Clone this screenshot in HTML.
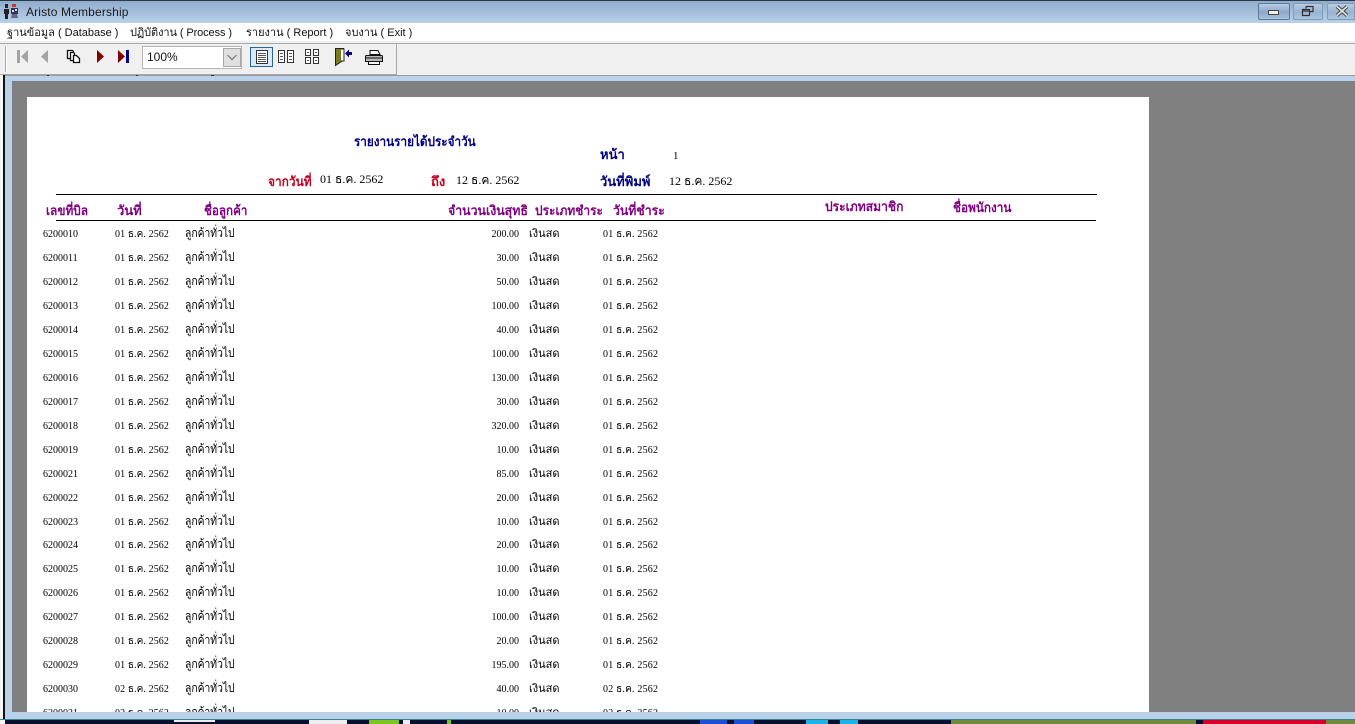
<!DOCTYPE html>
<html><head><meta charset="utf-8"><style>
html,body{margin:0;padding:0;width:1355px;height:724px;overflow:hidden;background:#fff}
*{box-sizing:border-box}
.a{position:absolute;white-space:nowrap}
.ui{font-family:"Liberation Sans","DejaVu Sans",sans-serif;font-size:11px;color:#111}
#rep,#rep *{font-family:"Liberation Serif","DejaVu Serif","DejaVu Sans",serif}
.h{font-weight:bold;font-size:13px;line-height:16px;transform-origin:0 50%}
.n{color:#000080}.r{color:#c00020}.p{color:#800080}
.v{font-size:12px;line-height:14px;color:#000}
.row{position:absolute;left:0;width:1122px;height:20px;font-size:10px;line-height:20px;color:#000}
.row span{position:absolute;white-space:nowrap;top:2px}
.row .b{left:16px}
.row .d{left:88px;letter-spacing:.1px}
.row .c{left:158px;font-size:12px;top:0;transform:scaleX(.86);transform-origin:0 50%}
.row .m{right:630px}
.row .t{left:502px;font-size:11px;top:1px}
.row .e{left:576px;letter-spacing:.2px}
</style></head><body>
<div class="a" style="left:0;top:0;width:1355px;height:23px;background:linear-gradient(#8fabca,#b9d1ea)"></div>
<div class="a" style="left:0;top:0;width:1355px;height:1px;background:#2b3a4b"></div>
<svg class="a" style="left:3px;top:3px" width="17" height="17" viewBox="0 0 17 17"><path d="M2 1h3v4H2zM1 6h5v5H5v5H2v-5H1z" fill="#222"/><path d="M9 1h4v3H9z" fill="#c33"/><path d="M8 5h7v6H8z" fill="#335"/><path d="M9 11l-1 4h7l-1-4z" fill="#668"/><path d="M9 7h2v2H9zM12 6h2v2h-2z" fill="#ddd"/></svg>
<div class="a ui" style="left:26px;top:4px;font-size:12px;line-height:16px;letter-spacing:.15px;color:#1a1a1a">Aristo Membership</div>
<div class="a" style="left:1258px;top:3px;width:32px;height:17px;border:1px solid #5d7a99;border-radius:2px;background:linear-gradient(#b8cce2,#8ca8c8 55%,#a9c2dd)"></div>
<div class="a" style="left:1268px;top:10px;width:11px;height:5px;border:1px solid #444;background:#eee"></div>
<div class="a" style="left:1293px;top:3px;width:30px;height:17px;border:1px solid #7f9bba;border-radius:2px;background:linear-gradient(#b8cce2,#98b3d1 55%,#aec6e0)"></div>
<svg class="a" style="left:1301px;top:5px" width="14" height="12" viewBox="0 0 14 12"><path d="M5 1.500h7v5H9M5 1.500v2M1.500 4.500h7v6h-7zM1.500 6h7" fill="none" stroke="#333" stroke-width="1.200"/></svg>
<div class="a" style="left:1327px;top:3px;width:28px;height:17px;border:1px solid #7f9bba;border-radius:2px 0 0 2px;background:linear-gradient(#b8cce2,#98b3d1 55%,#aec6e0)"></div>
<svg class="a" style="left:1335px;top:5px" width="14" height="12" viewBox="0 0 14 12"><path d="M2 1.500l10 9M12 1.500l-10 9" stroke="#444" stroke-width="3.600"/><path d="M2 1.500l10 9M12 1.500l-10 9" stroke="#e4e4e4" stroke-width="1.600"/></svg>

<div class="a" style="left:0;top:23px;width:1355px;height:18px;background:#fff"></div>
<div class="a ui" style="left:7px;top:25px;line-height:16px">ฐานข้อมูล ( Database )</div>
<div class="a ui" style="left:130px;top:25px;line-height:16px;letter-spacing:-.1px">ปฏิบัติงาน ( Process )</div>
<div class="a ui" style="left:246px;top:25px;line-height:16px">รายงาน ( Report )</div>
<div class="a ui" style="left:345px;top:25px;line-height:16px">จบงาน ( Exit )</div>

<div class="a" style="left:0;top:41px;width:1355px;height:34px;background:#f0f0f0"></div>
<div class="a" style="left:0;top:43px;width:1355px;height:1px;background:#a8a8a8"></div>
<div class="a" style="left:396px;top:43px;width:1px;height:32px;background:#a8a8a8"></div>
<div class="a" style="left:0;top:74px;width:397px;height:1px;background:#a8a8a8"></div>
<div class="a" style="left:5px;top:46px;width:2px;height:26px;border-left:1px solid #aaa;border-right:1px solid #fff"></div>

<svg class="a" style="left:0;top:44px" width="400" height="30" viewBox="0 44 400 30">
<path d="M17 50h3v13h-3zM28 50v13l-7-6.500z" fill="#a3a3a3"/>
<path d="M48 50v13l-7-6.500z" fill="#a3a3a3"/>
<path d="M67.500 50.500h5l1 1v7h-6z" fill="#fff" stroke="#111" stroke-width="1.300"/>
<path d="M70.500 52.500h3l1 1v7h-4z" fill="#fff" stroke="#111" stroke-width="1.300"/>
<path d="M73.500 55.500h3l3 3v4h-6z" fill="#fff" stroke="#111" stroke-width="1.300"/>
<path d="M97 50v13l7-6.500z" fill="#800000"/>
<path d="M118 50v13l7-6.500z" fill="#800000"/><path d="M126 50h3v13h-3z" fill="#000080"/>
<path d="M251 48h21v18h-21z" fill="#dbe9f7"/>
<path d="M250.500 47.500h22v19h-22z" fill="none" stroke="#2a6496"/>
<path d="M256.500 50.500h11v13h-11z" fill="#fff" stroke="#333"/>
<path d="M258 53.500h8M258 55.500h8M258 57.500h8M258 59.500h8M258 61.500h8" fill="none" stroke="#555"/>
<path d="M278.500 50.500h6v12h-6zM287.500 50.500h6v12h-6z" fill="#fff" stroke="#333"/>
<path d="M280 53.500h3M280 56.500h3M280 59.500h3M289 53.500h3M289 56.500h3M289 59.500h3" fill="none" stroke="#555"/>
<path d="M305.500 49.500h5v6h-5zM313.500 49.500h5v6h-5zM305.500 57.500h5v6h-5zM313.500 57.500h5v6h-5z" fill="#fff" stroke="#333"/>
<path d="M307 52.500h2M315 52.500h2M307 60.500h2M315 60.500h2" fill="none" stroke="#555"/>
<path d="M335.500 48.500h8v2l-2 0v11l-6 4z" fill="#7a7a20" stroke="#222"/><path d="M341 49h3v12h-3" fill="#fff" stroke="#222"/>
<path d="M345 53.500l4-4v2.500h3v3h-3v2.500z" fill="#000080"/>
<path d="M370 50.500h8l2 4h-10z" fill="#fff" stroke="#111"/><path d="M366.500 55.500h15q1 0 1 1v5h-17v-5q0-1 1-1z" fill="#bbb" stroke="#111"/><path d="M368.500 61.500h11v3h-11z" fill="#fff" stroke="#111"/><path d="M366 58h16" stroke="#111"/>
</svg>
<div class="a" style="left:142px;top:46px;width:100px;height:23px;background:#fff;border:1px solid #b5b5b5"></div>
<div class="a ui" style="left:147px;top:50px;line-height:15px;font-size:12px">100%</div>
<div class="a" style="left:223px;top:48px;width:18px;height:19px;background:#dfdfdf;border:1px solid #a8a8a8"></div>
<svg class="a" style="left:226px;top:54px" width="12" height="7" viewBox="0 0 12 7"><path d="M1.500 1l4.500 4.500 4.500-4.500" fill="none" stroke="#777" stroke-width="1.200"/></svg>

<div class="a" style="left:0;top:75px;width:3px;height:644px;background:#f4f4f4"></div>
<div class="a" style="left:3px;top:75px;width:2px;height:645px;background:#111"></div>
<div class="a" style="left:5px;top:75px;width:1350px;height:1px;background:#9a9a9a"></div>
<div class="a" style="left:47px;top:75px;width:2px;height:1px;background:#333"></div>
<div class="a" style="left:136px;top:75px;width:2px;height:1px;background:#333"></div>
<div class="a" style="left:211px;top:75px;width:3px;height:1px;background:#333"></div>
<div class="a" style="left:5px;top:76px;width:1350px;height:643px;background:#b9d1ea"></div>
<div class="a" style="left:12px;top:81px;width:1343px;height:631px;background:#808080"></div>
<div class="a" style="left:0;top:719px;width:1355px;height:1px;background:#3d7f90"></div>
<div class="a" style="left:0;top:720px;width:1355px;height:4px;background:#081030"></div>
<div class="a" style="left:0;top:720px;width:5px;height:4px;background:#f4f4f4"></div>
<div class="a" style="left:174px;top:720px;width:41px;height:2px;background:#eee"></div>
<div class="a" style="left:309px;top:720px;width:38px;height:4px;background:#eee"></div>
<div class="a" style="left:369px;top:720px;width:30px;height:4px;background:#7dc41e"></div>
<div class="a" style="left:403px;top:720px;width:7px;height:4px;background:#eee"></div>
<div class="a" style="left:447px;top:720px;width:4px;height:4px;background:#7dc41e"></div>
<div class="a" style="left:700px;top:720px;width:27px;height:4px;background:#1d4ed8"></div>
<div class="a" style="left:734px;top:720px;width:20px;height:4px;background:#1d4ed8"></div>
<div class="a" style="left:806px;top:720px;width:22px;height:4px;background:#19b5e8"></div>
<div class="a" style="left:840px;top:720px;width:18px;height:4px;background:#19b5e8"></div>
<div class="a" style="left:951px;top:720px;width:245px;height:4px;background:#6f8a3c"></div>
<div class="a" style="left:1203px;top:720px;width:123px;height:4px;background:#d8002a"></div>
<div class="a" style="left:1326px;top:720px;width:29px;height:4px;background:#6f8a3c"></div>

<div id="rep" class="a" style="left:27px;top:97px;width:1122px;height:615px;background:#fff;overflow:hidden">
<div class="a h n" style="left:327px;top:37px;transform:scaleX(.904)">รายงานรายได้ประจำวัน</div>
<div class="a h n" style="left:573px;top:50px">หน้า</div>
<div class="a v" style="left:646px;top:52px;font-size:11px">1</div>
<div class="a h r" style="left:241px;top:77px;transform:scaleX(.917)">จากวันที่</div>
<div class="a v" style="left:293px;top:75px">01 ธ.ค. 2562</div>
<div class="a h r" style="left:404px;top:77px">ถึง</div>
<div class="a v" style="left:429px;top:76px">12 ธ.ค. 2562</div>
<div class="a h n" style="left:573px;top:77px">วันที่พิมพ์</div>
<div class="a v" style="left:642px;top:77px">12 ธ.ค. 2562</div>
<div class="a" style="left:29px;top:97px;width:1041px;height:1px;background:#000"></div>
<div class="a" style="left:29px;top:123px;width:1040px;height:1px;background:#000"></div>
<div class="a h p" style="left:19px;top:106px;transform:scaleX(.913)">เลขที่บิล</div>
<div class="a h p" style="left:90px;top:106px">วันที่</div>
<div class="a h p" style="left:177px;top:106px;transform:scaleX(.896)">ชื่อลูกค้า</div>
<div class="a h p" style="left:421px;top:106px;transform:scaleX(.95)">จำนวนเงินสุทธิ</div>
<div class="a h p" style="left:508px;top:106px;transform:scaleX(.92)">ประเภทชำระ</div>
<div class="a h p" style="left:586px;top:106px;transform:scaleX(.945)">วันที่ชำระ</div>
<div class="a h p" style="left:798px;top:102px;transform:scaleX(.93)">ประเภทสมาชิก</div>
<div class="a h p" style="left:926px;top:103px;transform:scaleX(.906)">ชื่อพนักงาน</div>

<div class="row" style="top:126px"><span class="b">6200010</span><span class="d">01 ธ.ค. 2562</span><span class="c">ลูกค้าทั่วไป</span><span class="m">200.00</span><span class="t">เงินสด</span><span class="e">01 ธ.ค. 2562</span></div>
<div class="row" style="top:150px"><span class="b">6200011</span><span class="d">01 ธ.ค. 2562</span><span class="c">ลูกค้าทั่วไป</span><span class="m">30.00</span><span class="t">เงินสด</span><span class="e">01 ธ.ค. 2562</span></div>
<div class="row" style="top:174px"><span class="b">6200012</span><span class="d">01 ธ.ค. 2562</span><span class="c">ลูกค้าทั่วไป</span><span class="m">50.00</span><span class="t">เงินสด</span><span class="e">01 ธ.ค. 2562</span></div>
<div class="row" style="top:198px"><span class="b">6200013</span><span class="d">01 ธ.ค. 2562</span><span class="c">ลูกค้าทั่วไป</span><span class="m">100.00</span><span class="t">เงินสด</span><span class="e">01 ธ.ค. 2562</span></div>
<div class="row" style="top:222px"><span class="b">6200014</span><span class="d">01 ธ.ค. 2562</span><span class="c">ลูกค้าทั่วไป</span><span class="m">40.00</span><span class="t">เงินสด</span><span class="e">01 ธ.ค. 2562</span></div>
<div class="row" style="top:246px"><span class="b">6200015</span><span class="d">01 ธ.ค. 2562</span><span class="c">ลูกค้าทั่วไป</span><span class="m">100.00</span><span class="t">เงินสด</span><span class="e">01 ธ.ค. 2562</span></div>
<div class="row" style="top:270px"><span class="b">6200016</span><span class="d">01 ธ.ค. 2562</span><span class="c">ลูกค้าทั่วไป</span><span class="m">130.00</span><span class="t">เงินสด</span><span class="e">01 ธ.ค. 2562</span></div>
<div class="row" style="top:294px"><span class="b">6200017</span><span class="d">01 ธ.ค. 2562</span><span class="c">ลูกค้าทั่วไป</span><span class="m">30.00</span><span class="t">เงินสด</span><span class="e">01 ธ.ค. 2562</span></div>
<div class="row" style="top:318px"><span class="b">6200018</span><span class="d">01 ธ.ค. 2562</span><span class="c">ลูกค้าทั่วไป</span><span class="m">320.00</span><span class="t">เงินสด</span><span class="e">01 ธ.ค. 2562</span></div>
<div class="row" style="top:342px"><span class="b">6200019</span><span class="d">01 ธ.ค. 2562</span><span class="c">ลูกค้าทั่วไป</span><span class="m">10.00</span><span class="t">เงินสด</span><span class="e">01 ธ.ค. 2562</span></div>
<div class="row" style="top:366px"><span class="b">6200021</span><span class="d">01 ธ.ค. 2562</span><span class="c">ลูกค้าทั่วไป</span><span class="m">85.00</span><span class="t">เงินสด</span><span class="e">01 ธ.ค. 2562</span></div>
<div class="row" style="top:390px"><span class="b">6200022</span><span class="d">01 ธ.ค. 2562</span><span class="c">ลูกค้าทั่วไป</span><span class="m">20.00</span><span class="t">เงินสด</span><span class="e">01 ธ.ค. 2562</span></div>
<div class="row" style="top:414px"><span class="b">6200023</span><span class="d">01 ธ.ค. 2562</span><span class="c">ลูกค้าทั่วไป</span><span class="m">10.00</span><span class="t">เงินสด</span><span class="e">01 ธ.ค. 2562</span></div>
<div class="row" style="top:437px"><span class="b">6200024</span><span class="d">01 ธ.ค. 2562</span><span class="c">ลูกค้าทั่วไป</span><span class="m">20.00</span><span class="t">เงินสด</span><span class="e">01 ธ.ค. 2562</span></div>
<div class="row" style="top:461px"><span class="b">6200025</span><span class="d">01 ธ.ค. 2562</span><span class="c">ลูกค้าทั่วไป</span><span class="m">10.00</span><span class="t">เงินสด</span><span class="e">01 ธ.ค. 2562</span></div>
<div class="row" style="top:485px"><span class="b">6200026</span><span class="d">01 ธ.ค. 2562</span><span class="c">ลูกค้าทั่วไป</span><span class="m">10.00</span><span class="t">เงินสด</span><span class="e">01 ธ.ค. 2562</span></div>
<div class="row" style="top:509px"><span class="b">6200027</span><span class="d">01 ธ.ค. 2562</span><span class="c">ลูกค้าทั่วไป</span><span class="m">100.00</span><span class="t">เงินสด</span><span class="e">01 ธ.ค. 2562</span></div>
<div class="row" style="top:533px"><span class="b">6200028</span><span class="d">01 ธ.ค. 2562</span><span class="c">ลูกค้าทั่วไป</span><span class="m">20.00</span><span class="t">เงินสด</span><span class="e">01 ธ.ค. 2562</span></div>
<div class="row" style="top:557px"><span class="b">6200029</span><span class="d">01 ธ.ค. 2562</span><span class="c">ลูกค้าทั่วไป</span><span class="m">195.00</span><span class="t">เงินสด</span><span class="e">01 ธ.ค. 2562</span></div>
<div class="row" style="top:581px"><span class="b">6200030</span><span class="d">02 ธ.ค. 2562</span><span class="c">ลูกค้าทั่วไป</span><span class="m">40.00</span><span class="t">เงินสด</span><span class="e">02 ธ.ค. 2562</span></div>
<div class="row" style="top:605px"><span class="b">6200031</span><span class="d">02 ธ.ค. 2562</span><span class="c">ลูกค้าทั่วไป</span><span class="m">10.00</span><span class="t">เงินสด</span><span class="e">02 ธ.ค. 2562</span></div>
</div>
</body></html>
